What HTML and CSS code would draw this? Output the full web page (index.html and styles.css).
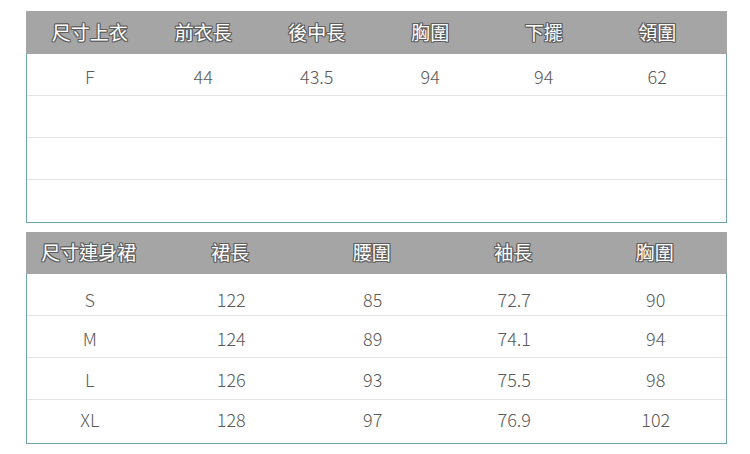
FILE: index.html
```html
<!DOCTYPE html>
<html lang="zh-Hant">
<head>
<meta charset="utf-8">
<title>尺寸表</title>
<link rel="stylesheet" href="styles.css">
</head>
<body>
<div class="page">
  <section class="sheet sheet-top">
    <div class="head grid6">
      <span>尺寸上衣</span><span>前衣長</span><span>後中長</span><span>胸圍</span><span>下擺</span><span>領圍</span>
    </div>
    <div class="body">
      <div class="row grid6"><span>F</span><span>44</span><span>43.5</span><span>94</span><span>94</span><span>62</span></div>
      <div class="row grid6"></div>
      <div class="row grid6"></div>
      <div class="row grid6"></div>
    </div>
  </section>
  <section class="sheet sheet-bottom">
    <div class="head"><div class="grid5">
      <span>尺寸連身裙</span><span>裙長</span><span>腰圍</span><span>袖長</span><span>胸圍</span>
    </div></div>
    <div class="body">
      <div class="row"><div class="grid5"><span>S</span><span>122</span><span>85</span><span>72.7</span><span>90</span></div></div>
      <div class="row"><div class="grid5"><span>M</span><span>124</span><span>89</span><span>74.1</span><span>94</span></div></div>
      <div class="row"><div class="grid5"><span>L</span><span>126</span><span>93</span><span>75.5</span><span>98</span></div></div>
      <div class="row"><div class="grid5"><span>XL</span><span>128</span><span>97</span><span>76.9</span><span>102</span></div></div>
    </div>
  </section>
</div>
</body>
</html>
```

FILE: styles.css
```css
html, body {
  margin: 0;
  padding: 0;
  background: #ffffff;
}
body {
  font-family: "Noto Sans CJK TC", "Noto Sans", sans-serif;
}
.page {
  padding: 11px 0 0 26px;
  width: 701px;
}
.sheet {
  width: 701px;
}
.sheet-bottom {
  margin-top: 9px;
}
.head {
  background: #a5a5a5;
  color: #ffffff;
  font-size: 19px;
  font-weight: 400;
  text-shadow:
    1px 0 0 #5e5e5e, -1px 0 0 #5e5e5e, 0 1px 0 #5e5e5e, 0 -1px 0 #5e5e5e,
    1px 1px 0 #5e5e5e, -1px -1px 0 #5e5e5e, 1px -1px 0 #5e5e5e, -1px 1px 0 #5e5e5e;
}
.sheet-top .head {
  height: 43px;
  padding-left: 7px;
  box-sizing: border-box;
}
.sheet-bottom .head {
  height: 42px;
}
.body {
  border: 1px solid #6ea4a7;
  border-top: none;
  color: #5a5a5a;
  font-size: 18px;
  font-weight: 300;
}
.sheet-top .body .row {
  padding-left: 6px;
}
.row {
  height: 41px;
  box-sizing: content-box;
  border-bottom: 1px solid #e4e4e4;
}
.row:last-child {
  border-bottom: none;
}
.grid6 {
  display: grid;
  grid-template-columns: repeat(6, 113.5px);
  align-items: center;
  justify-items: center;
}
.row.grid6 {
  padding-top: 3px;
  height: 38px;
}
.row.grid6:last-child {
  height: 39px;
}
.head.grid6 {
  padding-bottom: 3px;
}
.grid5 {
  display: grid;
  grid-template-columns: repeat(5, 141.5px);
  align-items: center;
  justify-items: center;
  height: 100%;
  margin-left: -8px;
  box-sizing: border-box;
}
.head .grid5 {
  padding-bottom: 3px;
}
.sheet-bottom .row:last-child {
  height: 43px;
}
.body .row:nth-child(1) .grid5 {
  padding-top: 8px;
}
.body .row:nth-child(2) .grid5 {
  padding-top: 2px;
}
.body .row:nth-child(4) .grid5 {
  padding-bottom: 6px;
}
```
